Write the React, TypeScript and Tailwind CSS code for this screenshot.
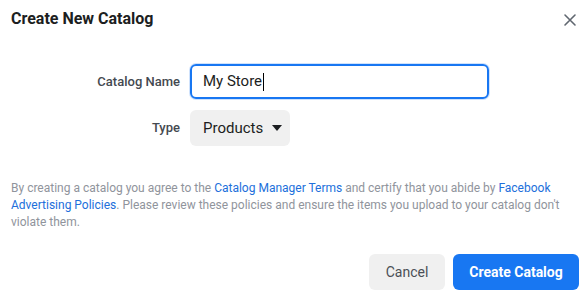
import React from "react";

export default function App() {
  return (
    <div
      className="w-[587px] h-[296px] bg-white relative overflow-hidden"
      style={{ fontFamily: "Roboto, 'Liberation Sans', sans-serif" }}
    >
      <div className="flex items-center justify-between pl-[11px] pr-[10px] pt-[6px] h-[32px]">
        <div className="text-[16px] font-bold text-[#1c1e21]">Create New Catalog</div>
        <svg width="14" height="14" viewBox="0 0 14 14" className="mt-[2px]">
          <path d="M2 2 L12 12 M12 2 L2 12" stroke="#606770" strokeWidth="1.6" strokeLinecap="round" />
        </svg>
      </div>

      <div className="mt-[32px] flex flex-col gap-[11px]">
        <div className="flex items-center">
          <div className="w-[190px] pr-[10px] text-right text-[13px] font-medium text-[#444950]">Catalog Name</div>
          <div className="w-[299px] h-[35px] rounded-[6px] border-2 border-[#1877f2] shadow-[0_0_0_1px_#cfe2fc] flex items-center pl-[11px] text-[15px] text-[#1c1e21]">
            My Store<span className="inline-block w-[1px] h-[18px] bg-black ml-[1px]" />
          </div>
        </div>
        <div className="flex items-center">
          <div className="w-[190px] pr-[10px] text-right text-[13px] font-medium text-[#444950]">Type</div>
          <div className="w-[100px] h-[36px] rounded-[6px] bg-[#f0f0f0] flex items-center pl-[13px] text-[15px] text-[#1c1e21]">
            Products
            <svg width="12" height="8" viewBox="0 0 12 8" className="ml-[8px]">
              <path d="M1 1 L11 1 L6 7 Z" fill="#1c1e21" />
            </svg>
          </div>
        </div>
      </div>

      <p className="mt-[34px] px-[11px] text-[12px] leading-[17px] text-[#90949c]">
        By creating a catalog you agree to the <span className="text-[#216fdb]">Catalog Manager Terms</span> and certify that you abide by{" "}
        <span className="text-[#216fdb]">Facebook Advertising Policies</span>. Please review these policies and ensure the items you upload to your catalog don't violate them.
      </p>

      <div className="absolute right-[8px] bottom-[6px] flex gap-[8px]">
        <button className="w-[76px] h-[36px] rounded-[6px] bg-[#f0f0f0] text-[14px] text-[#4b4f56]">Cancel</button>
        <button className="w-[126px] h-[36px] rounded-[6px] bg-[#1877f2] text-[14px] font-bold text-white">Create Catalog</button>
      </div>
    </div>
  );
}
